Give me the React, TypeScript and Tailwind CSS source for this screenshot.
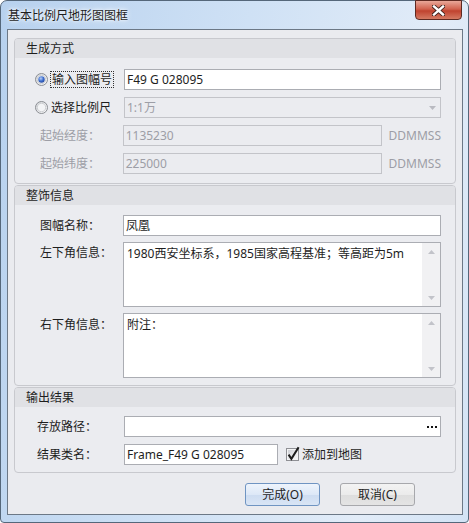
import React from "react";

function Radio({ checked, id }: { checked?: boolean; id: string }) {
    return (
        <svg width="13" height="13" viewBox="0 0 13 13" className="shrink-0">
            <defs>
                <linearGradient id={`${id}-o`} x1="0" y1="0" x2="1" y2="1">
                    <stop offset="0" stopColor="#d2d4d8" />
                    <stop offset="1" stopColor="#fbfbfc" />
                </linearGradient>
                <radialGradient id={`${id}-d`} cx="0.4" cy="0.35" r="0.7">
                    <stop offset="0" stopColor="#b9d0f4" />
                    <stop offset="0.55" stopColor="#3f6fd0" />
                    <stop offset="1" stopColor="#23469a" />
                </radialGradient>
            </defs>
            <circle cx="6.5" cy="6.5" r="6" fill={`url(#${id}-o)`} stroke="#8b8e93" />
            <circle cx="6.5" cy="6.5" r="4.2" fill="#f3f4f6" stroke="#c4c6ca" strokeWidth="0.8" />
            {checked && <circle cx="6.5" cy="6.5" r="3.2" fill={`url(#${id}-d)`} />}
        </svg>
    );
}

function Check() {
    return (
        <svg width="14" height="14" viewBox="0 0 14 14" className="shrink-0 overflow-visible">
            <defs>
                <linearGradient id="cb" x1="0" y1="0" x2="1" y2="1">
                    <stop offset="0" stopColor="#cfd1d6" />
                    <stop offset="1" stopColor="#f7f7f8" />
                </linearGradient>
            </defs>
            <rect x="0.5" y="0.5" width="12" height="12" fill="#f4f4f5" stroke="#8f9095" />
            <rect x="2" y="2" width="9" height="9" fill="url(#cb)" />
            <path d="M2.6 6.6 L5.4 10.8 L12.6 -0.8" fill="none" stroke="#1c1c1c" strokeWidth="2" strokeLinejoin="miter" />
        </svg>
    );
}

function Arrow({ up, color = "#c2c3c9" }: { up?: boolean; color?: string }) {
    return (
        <svg width="7" height="4" viewBox="0 0 7 4">
            <path d={up ? "M0 4 L3.5 0 L7 4 Z" : "M0 0 L7 0 L3.5 4 Z"} fill={color} />
        </svg>
    );
}

function Field({ children, className = "" }: { children?: React.ReactNode; className?: string }) {
    return (
        <div className={`flex h-[21px] items-center border border-[#abadb3] bg-white pl-[2px] leading-[17px] ${className}`}>
            {children}
        </div>
    );
}

function Disabled({ children, className = "" }: { children?: React.ReactNode; className?: string }) {
    return (
        <div className={`flex h-[21px] items-center border border-[#c3c4c9] bg-[#ebecf0] pl-[2px] leading-[17px] text-[#9d9ea6] ${className}`}>
            {children}
        </div>
    );
}

function Memo({ text }: { text: string }) {
    return (
        <div className="flex h-[65px] flex-1 border border-[#abadb3] bg-white">
            <div className="flex-1 pl-[3px] pt-[2px] leading-[17px]">{text}</div>
            <div className="flex w-[18px] flex-col items-center justify-between bg-[#f1f1f3] pb-[6px] pt-[7px]">
                <Arrow up />
                <Arrow />
            </div>
        </div>
    );
}

function Group({ title, children, className = "" }: { title: string; children: React.ReactNode; className?: string }) {
    return (
        <div className={`overflow-hidden rounded-[4px] border border-[#c8c9ce] bg-[#ebecf0] ${className}`}>
            <div className="h-[19px] bg-[#e0e1e5] pl-[11px] leading-[19px]">{title}</div>
            {children}
        </div>
    );
}

export default function App() {
    return (
        <div className="h-[523px] w-[469px] font-['Noto_Sans','Noto_Sans_CJK_SC',sans-serif] text-[12px] text-[#1e1e1e]">
            <div className="flex h-full flex-col rounded-t-[7px] rounded-b-[4px] border border-[#55677a] bg-[linear-gradient(100deg,#b7d1ee,#cfe1f5_45%,#e2ecf8_80%,#d3e3f5)]">
                {/* title bar */}
                <div className="flex h-[28px] items-start justify-between">
                    <span className="pl-[7px] pt-[6px] leading-[17px] [text-shadow:0_0_6px_#fff,0_0_3px_#fff]">基本比例尺地形图图框</span>
                    <div className="mr-[6px] -mt-[1px] flex h-[20px] w-[47px] items-center justify-center rounded-b-[4px] border border-[#5e2a22] bg-[linear-gradient(180deg,#e9a899,#d1624e_45%,#c0432f_55%,#d57a63)]">
                        <svg width="13" height="11" viewBox="0 0 13 11">
                            <path d="M2 1.5 L11 9.5 M11 1.5 L2 9.5" stroke="#3c1f1a" strokeWidth="4.2" strokeLinecap="square" />
                            <path d="M2 1.5 L11 9.5 M11 1.5 L2 9.5" stroke="#ffffff" strokeWidth="2.4" strokeLinecap="square" />
                        </svg>
                    </div>
                </div>

                {/* client */}
                <div className="ml-[6px] mr-[5px] flex h-[486px] flex-col border border-[#6c7886] bg-[#eaebef] px-[6px] pb-[8px] pt-[8px]">
                    <Group title="生成方式">
                        <div className="flex flex-col gap-[7px] pb-[9px] pr-[14px] pt-[11px]">
                            <div className="flex h-[21px] items-center">
                                <div className="flex w-[109px] items-center pl-[20px]">
                                    <Radio checked id="r1" />
                                    <span className="ml-[2px] border border-dotted border-[#333] px-[1px] leading-[15px]">输入图幅号</span>
                                </div>
                                <Field className="flex-1">F49 G 028095</Field>
                            </div>
                            <div className="flex h-[21px] items-center">
                                <div className="flex w-[109px] items-center pl-[20px]">
                                    <Radio id="r2" />
                                    <span className="ml-[3px] leading-[17px]">选择比例尺</span>
                                </div>
                                <Disabled className="flex-1 justify-between pr-[4px]">
                                    <span>1:1万</span>
                                    <Arrow color="#b9bac1" />
                                </Disabled>
                            </div>
                            <div className="flex h-[21px] items-center text-[#9d9ea6]">
                                <div className="w-[109px] pl-[25px] leading-[17px]">起始经度：</div>
                                <Disabled className="w-[263px]">1135230</Disabled>
                                <span className="ml-[7px] leading-[17px]">DDMMSS</span>
                            </div>
                            <div className="flex h-[21px] items-center text-[#9d9ea6]">
                                <div className="w-[109px] pl-[25px] leading-[17px]">起始纬度：</div>
                                <Disabled className="w-[263px]">225000</Disabled>
                                <span className="ml-[7px] leading-[17px]">DDMMSS</span>
                            </div>
                        </div>
                    </Group>

                    <Group title="整饰信息" className="mt-[1px]">
                        <div className="flex flex-col gap-[6px] pb-[7px] pr-[14px] pt-[10px]">
                            <div className="flex h-[21px] items-center">
                                <div className="w-[108px] pl-[25px] leading-[17px]">图幅名称：</div>
                                <Field className="flex-1">凤凰</Field>
                            </div>
                            <div className="flex">
                                <div className="w-[108px] pl-[25px] pt-[2px] leading-[17px]">左下角信息：</div>
                                <Memo text="1980西安坐标系，1985国家高程基准；等高距为5m" />
                            </div>
                            <div className="flex">
                                <div className="w-[108px] pl-[25px] pt-[3px] leading-[17px]">右下角信息：</div>
                                <Memo text="附注：" />
                            </div>
                        </div>
                    </Group>

                    <Group title="输出结果" className="mt-[1px]">
                        <div className="flex flex-col gap-[7px] pb-[7px] pr-[14px] pt-[9px]">
                            <div className="flex h-[21px] items-center">
                                <div className="w-[109px] pl-[22px] leading-[17px]">存放路径：</div>
                                <Field className="flex-1 justify-end pr-[3px]">
                                    <span className="flex gap-[2px]">
                                        <i className="block h-[2px] w-[2px] bg-[#111]" />
                                        <i className="block h-[2px] w-[2px] bg-[#111]" />
                                        <i className="block h-[2px] w-[2px] bg-[#111]" />
                                    </span>
                                </Field>
                            </div>
                            <div className="flex h-[21px] items-center">
                                <div className="w-[109px] pl-[22px] leading-[17px]">结果类名：</div>
                                <Field className="w-[154px]">Frame_F49 G 028095</Field>
                                <div className="ml-[8px] flex items-center">
                                    <Check />
                                    <span className="ml-[2px] leading-[17px]">添加到地图</span>
                                </div>
                            </div>
                        </div>
                    </Group>

                    <div className="mr-[41px] mt-[10px] flex justify-end gap-[20px]">
                        <button className="h-[23px] w-[75px] rounded-[3px] border border-[#6f94c2] bg-[linear-gradient(180deg,#eef4fc,#dde8f7_50%,#cddcf1_51%,#d9e5f5)] leading-[17px]">
                            完成(O)
                        </button>
                        <button className="h-[23px] w-[75px] rounded-[3px] border border-[#a7a8ac] bg-[linear-gradient(180deg,#f3f3f3,#ebebeb_50%,#dddddd_51%,#e4e4e4)] leading-[17px]">
                            取消(C)
                        </button>
                    </div>
                </div>
            </div>
        </div>
    );
}
